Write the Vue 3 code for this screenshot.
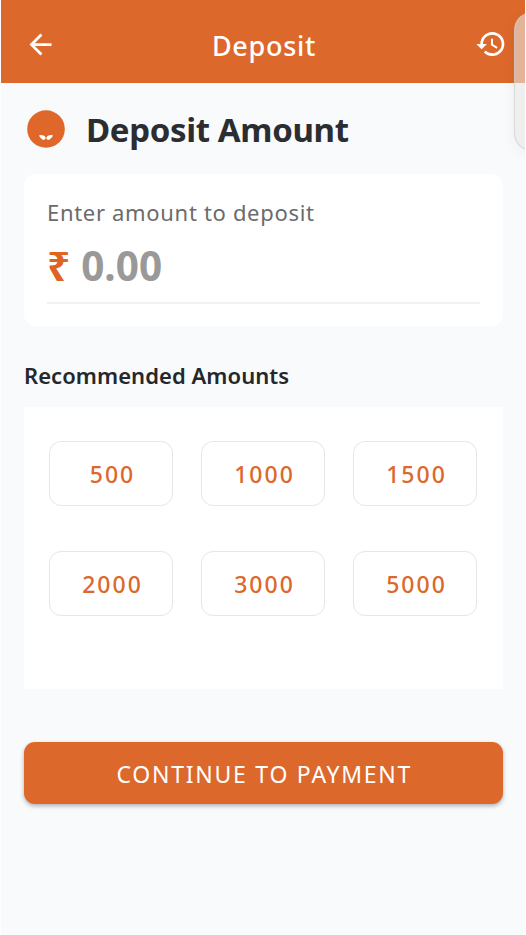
<template>
  <div class="deposit-view">
    <header class="app-bar">
      <button class="icon-btn" aria-label="Back">
        <svg width="33" height="33" viewBox="0 0 24 24" fill="#fff">
          <path d="M20 11H7.83l5.59-5.59L12 4l-8 8 8 8 1.41-1.41L7.83 13H20v-2z" />
        </svg>
      </button>
      <h1>Deposit</h1>
      <button class="icon-btn" aria-label="History">
        <svg width="32" height="32" viewBox="0 0 24 24" fill="#fff">
          <path d="M13 3a9 9 0 0 0-9 9H1l3.89 3.89.07.14L9 12H6c0-3.87 3.13-7 7-7s7 3.13 7 7-3.13 7-7 7c-1.93 0-3.68-.79-4.94-2.06l-1.42 1.42A8.954 8.954 0 0 0 13 21a9 9 0 0 0 0-18zm-1 5v5l4.28 2.54.72-1.21-3.5-2.08V8H12z" />
        </svg>
      </button>
    </header>
    <div class="edge-handle"></div>

    <main class="content">
      <div class="section-title">
        <svg class="badge" width="38" height="38" viewBox="0 0 38 38">
          <circle cx="19" cy="19" r="18.8" fill="#e0672a" />
          <path d="M12.2 25.2c3.4-.5 6.2.8 6.5 3-.8 1.9-3.5 2.4-4.2.3-1.2-.6-2-1.6-2.3-3.3zM25.8 25.2c-3.4-.5-6.2.8-6.5 3 .8 1.9 3.5 2.4 4.2.3 1.2-.6 2-1.6 2.3-3.3z" fill="#fff" />
        </svg>
        <h2>Deposit Amount</h2>
      </div>

      <div class="amount-card">
        <p class="amount-label">Enter amount to deposit</p>
        <div class="amount-row">
          <span class="currency">₹</span>
          <span class="amount">{{ amount }}</span>
        </div>
      </div>

      <h3>Recommended Amounts</h3>
      <div class="recommended">
        <button
          v-for="value in recommendedAmounts"
          :key="value"
          class="chip"
          @click="amount = value.toFixed(2)"
        >
          {{ value }}
        </button>
      </div>

      <button class="continue-btn">CONTINUE TO PAYMENT</button>
    </main>
  </div>
</template>

<script setup>
import { ref } from 'vue';

const amount = ref('0.00');

const recommendedAmounts = [500, 1000, 1500, 2000, 3000, 5000];
</script>

<style>
body {
  background: #fff;
}
</style>

<style scoped>
.deposit-view {
  position: relative;
  box-sizing: border-box;
  height: 935px;
  margin: 0 1px;
  overflow: hidden;
  background: #f8fafc;
  font-family: "Noto Sans", "Open Sans", sans-serif;
}

h1,
h2,
h3,
p {
  margin: 0;
}

button {
  padding: 0;
  border: none;
  background: none;
  font-family: inherit;
  cursor: pointer;
}

.app-bar {
  display: flex;
  align-items: center;
  justify-content: space-between;
  box-sizing: border-box;
  height: 83px;
  padding: 5px 18px 0 23px;
  background: #dd682b;
}

.app-bar h1 {
  padding: 3px 4px 0 0;
  color: #fff;
  font-size: 27px;
  font-weight: 500;
  line-height: 36px;
  letter-spacing: 0.7px;
}

.icon-btn {
  display: flex;
}

/* floating system panel peeking in from the right edge */
.edge-handle {
  position: absolute;
  top: 12px;
  right: -25px;
  box-sizing: border-box;
  width: 36px;
  height: 139px;
  border: 1px solid rgba(200, 200, 200, 0.6);
  border-radius: 18px;
  background: rgba(232, 232, 228, 0.6);
  box-shadow: 0 2px 14px rgba(0, 0, 0, 0.06);
}

.content {
  padding: 0 22px 0 23px;
}

.section-title {
  display: flex;
  align-items: center;
  gap: 21px;
  height: 91px;
  padding-left: 3px;
}

.section-title h2 {
  padding-top: 2px;
  color: #2b2d31;
  font-size: 33px;
  font-weight: 700;
  line-height: 44px;
  letter-spacing: -0.35px;
  white-space: nowrap;
}

.amount-card {
  box-sizing: border-box;
  height: 152px;
  padding: 22px 23px 0 23px;
  border-radius: 12px;
  background: #fff;
}

.amount-label {
  color: #6b6b6b;
  font-size: 22px;
  line-height: 32px;
  letter-spacing: 0.68px;
}

.amount-row {
  display: flex;
  align-items: center;
  gap: 11px;
  height: 74px;
  border-bottom: 2px solid #f2f2f2;
  font-size: 40.5px;
  font-weight: 700;
  line-height: 74px;
}

.currency,
.amount {
  padding-top: 2px;
}

.currency {
  color: #e0631f;
}

.amount {
  color: #999;
}

h3 {
  margin-top: 33px;
  color: #25272b;
  font-size: 22px;
  font-weight: 600;
  line-height: 32px;
  letter-spacing: 0.05px;
}

.recommended {
  display: grid;
  grid-template-columns: repeat(3, 1fr);
  grid-auto-rows: 65px;
  gap: 45px 28px;
  box-sizing: border-box;
  height: 282px;
  margin-top: 16px;
  padding: 34px 26px 0 25px;
  background: #fff;
}

.chip {
  border: 1.5px solid #e6e6e6;
  border-radius: 12px;
  background: #fff;
  color: #dd682b;
  font-size: 23px;
  font-weight: 500;
  letter-spacing: 2px;
  text-indent: 3px;
}

.continue-btn {
  display: block;
  width: 100%;
  height: 62px;
  margin-top: 53px;
  padding-top: 2px;
  border-radius: 11px;
  background: #dd682b;
  box-shadow: 0 2px 4px rgba(0, 0, 0, 0.3);
  color: #fff;
  font-size: 23px;
  font-weight: 450;
  letter-spacing: 1.75px;
  text-indent: 1.6px;
}
</style>
